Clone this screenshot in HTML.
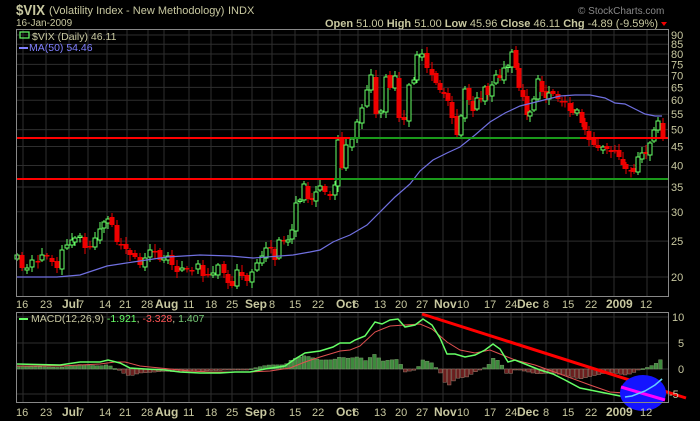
<!DOCTYPE html>
<html><head><meta charset="utf-8"><style>
body{margin:0;background:#000;width:700px;height:421px;overflow:hidden}
svg{display:block}
text{font-family:"Liberation Sans",sans-serif}
</style></head><body>
<svg id="s" width="700" height="421" xmlns="http://www.w3.org/2000/svg">
<rect width="700" height="421" fill="#000"/>
<g id="grid"></g>
<g id="mid"></g>
<text x="16" y="15" font-size="15" font-weight="bold" fill="#c8c8a0" textLength="29" lengthAdjust="spacingAndGlyphs">$VIX</text>
<text x="49" y="14" font-size="11" fill="#c8c8a0">(Volatility Index - New Methodology)</text>
<text x="228" y="14" font-size="11" fill="#c8c8a0">INDX</text>
<text x="16" y="26" font-size="10" fill="#c8c8a0">16-Jan-2009</text>
<text x="578" y="14" font-size="10" fill="#888">© StockCharts.com</text>
<text x="658" y="27" font-size="11" fill="#c8c8a0" text-anchor="end"><tspan font-weight="bold">Open</tspan> 51.00 <tspan font-weight="bold">High</tspan> 51.00 <tspan font-weight="bold">Low</tspan> 45.96 <tspan font-weight="bold">Close</tspan> 46.11 <tspan font-weight="bold">Chg</tspan> -4.89 (-9.59%)</text>
<polygon points="661,22 667,22 664,26" fill="#e00"/>
<rect x="20" y="32" width="9" height="6" fill="none" stroke="#6f6" stroke-width="1.2"/>
<text x="32" y="40" font-size="10.5" fill="#c8c8a0">$VIX (Daily) 46.11</text>
<rect x="19" y="47" width="9" height="2" fill="#8080ff"/>
<text x="29" y="51" font-size="10.5" fill="#8080ff">MA(50) 54.46</text>
<rect x="19" y="318" width="9" height="2" fill="#6f6"/>
<text x="31" y="322" font-size="10.5" fill="#c8c8a0">MACD(12,26,9) <tspan fill="#6f6">-1.921</tspan>, <tspan fill="#f55">-3.328</tspan>, <tspan fill="#7c7">1.407</tspan></text>
<g id="top"></g>
</svg>
<script>
var NS="http://www.w3.org/2000/svg";
function el(p,t,a){var e=document.createElementNS(NS,t);for(var k in a)e.setAttribute(k,a[k]);document.getElementById(p).appendChild(e);return e;}
function txt(p,x,y,s,o){var e=el(p,'text',Object.assign({x:x,y:y,'font-size':11,fill:'#c8c8a0'},o||{}));e.textContent=s;}
var vx=[23,46,69,88,107,127,148,164,189,211,232,252,272,295,318,340,358,380,400,422,443,462,490,511,522,546,568,591,614,647];
vx.forEach(function(x){el('grid','line',{x1:x,y1:30,x2:x,y2:296,stroke:'#2e2e2e'});el('grid','line',{x1:x,y1:312,x2:x,y2:403,stroke:'#2e2e2e'});});
function py(p){return 277-160.9*Math.log(p/20);}
[20,25,30,35,40,45,50,55,60,65,70,75,80,85,90].forEach(function(p){var y=py(p);el('grid','line',{x1:16,y1:y,x2:668,y2:y,stroke:'#2e2e2e'});txt('top',671,y+4,p,{'font-size':11});});
[[10,317],[5,343],[0,369],[-5,394]].forEach(function(a){el('grid','line',{x1:16,y1:a[1],x2:668,y2:a[1],stroke:'#2e2e2e'});txt('top',a[0]<0?669:(a[0]>9?672:678),a[1]+4,a[0],{'font-size':11});});
var dl=[[16,'16'],[40,'23'],[62,'Jul',1],[78,'7'],[99,'14'],[119,'21'],[141,'28'],[155,'Aug',1],[183,'11'],[205,'18'],[226,'25'],[245,'Sep',1],[269,'8'],[289,'15'],[312,'22'],[336,'Oct',1],[353,'6'],[374,'13'],[395,'20'],[416,'27'],[434,'Nov',1],[457,'10'],[484,'17'],[505,'24'],[517,'Dec',1],[543,'8'],[562,'15'],[585,'22'],[606,'2009',1],[640,'12']];
[304,412].forEach(function(r){dl.forEach(function(d){txt('top',d[0],r+4,d[1],d[2]?{'font-weight':'bold','font-size':12}:{'font-size':11});});});
var C=[[17,255],[22,268],[27,268],[32,260],[38,262],[42,255],[47,256],[52,262],[57,268],[62,250],[67,245],[72,240],[75,238],[80,236],[85,248],[90,247],[95,238],[100,229],[104,222],[108,219],[112,225],[117,242],[121,245],[126,249],[130,255],[135,257],[140,265],[145,258],[150,250],[155,252],[160,260],[164,258],[168,256],[172,265],[177,272],[182,268],[187,268],[192,270],[198,264],[203,276],[208,275],[213,273],[218,265],[224,273],[228,283],[232,286],[237,270],[242,276],[247,281],[252,272],[257,263],[262,256],[266,248],[271,248],[275,260],[279,240],[284,240],[288,240],[292,230],[296,203],[300,200],[304,184],[308,199],[312,200],[316,192],[320,186],[325,192],[330,196],[335,185],[338,140],[342,168],[346,145],[352,139],[357,122],[362,108],[367,90],[371,75],[376,114],[381,111],[386,77],[390,88],[395,76],[399,118],[404,120],[409,85],[414,80],[417,55],[422,54],[427,68],[432,75],[436,83],[440,90],[444,94],[448,101],[452,118],[457,135],[461,116],[465,89],[469,100],[473,111],[477,98],[481,99],[485,87],[488,95],[492,85],[496,75],[500,78],[504,68],[508,66],[512,52],[516,68],[519,88],[523,97],[527,115],[530,112],[534,99],[538,79],[542,92],[546,98],[549,93],[553,94],[558,99],[562,102],[565,102],[570,111],[573,113],[577,110],[582,123],[585,130],[589,140],[594,145],[598,148],[603,147],[607,149],[611,152],[615,150],[619,157],[623,165],[626,169],[631,170],[634,172],[638,157],[642,153],[646,154],[650,143],[654,130],[658,121],[663,137]];
for(var i=0;i<C.length;i++){var x=C[i][0],c=C[i][1],o=i?C[i-1][1]+((i*7)%5-2):c+4;var up=c<o;var t=Math.min(o,c),b=Math.max(o,c);if(b-t<1.5)b=t+1.5;var h=t-2-(i*13)%6,l=b+2+(i*11)%5;var col=up?'#66ff66':'#ee0000';
el('mid','line',{x1:x,y1:h,x2:x,y2:l,stroke:col,'stroke-width':1});
if(up)el('mid','rect',{x:x-2,y:t,width:4,height:b-t,fill:'#000',stroke:col,'stroke-width':1});else el('mid','rect',{x:x-2.5,y:t,width:5,height:b-t,fill:col});}
function pl(pts,col,w,g){el(g||'mid','polyline',{points:pts.map(function(p){return p.join(',')}).join(' '),fill:'none',stroke:col,'stroke-width':w});}
pl([[16,277],[57,277],[80,275],[107,266],[133,262],[167,257],[200,255],[230,256],[253,258],[293,255],[310,252],[320,250],[333,242],[340,239],[350,235],[367,225],[380,212],[395,197],[410,184],[420,171],[433,160],[447,153],[460,147],[475,135],[490,122],[505,113],[520,106],[540,101],[560,96],[575,95],[590,95],[605,98],[615,103],[625,104],[635,109],[645,114],[655,116],[662,116]],'#7070e0',1.2);
el('mid','line',{x1:16,y1:138,x2:668,y2:138,stroke:'#f00','stroke-width':2});
el('mid','line',{x1:350,y1:138,x2:580,y2:138,stroke:'#1a9a1a','stroke-width':2});
el('mid','line',{x1:16,y1:179,x2:334,y2:179,stroke:'#f00','stroke-width':2});
el('mid','line',{x1:334,y1:179,x2:668,y2:179,stroke:'#1a9a1a','stroke-width':2});
var M=[[16,364],[60,365],[80,362],[100,362],[108,360],[120,363],[130,368],[145,369],[165,370],[180,372],[200,373],[220,373],[235,372],[250,372],[265,369],[285,366],[295,359],[305,353],[320,351],[333,347],[340,343],[350,343],[355,340],[365,336],[375,322],[382,324],[390,320],[398,319],[405,327],[415,325],[423,319],[432,325],[440,338],[447,354],[455,354],[465,357],[475,355],[485,350],[493,344],[500,349],[508,362],[515,360],[525,364],[540,370],[553,374],[565,380],[580,388],[595,391],[610,394],[625,397],[632,396],[645,391],[655,385],[662,379]];
var S=[[16,366],[60,366],[100,364],[115,362],[125,362],[140,366],[160,368],[190,371],[210,372],[250,372],[270,371],[290,368],[305,362],[320,357],[340,351],[350,350],[360,346],[375,332],[390,326],[405,325],[420,324],[432,329],[447,342],[460,350],[475,353],[490,350],[500,354],[515,360],[535,365],[560,374],[590,385],[610,392],[625,393],[640,393],[662,386]];
function ip(a,x){for(var i=1;i<a.length;i++)if(a[i][0]>=x){var f=(x-a[i-1][0])/(a[i][0]-a[i-1][0]);return a[i-1][1]+f*(a[i][1]-a[i-1][1]);}return a[a.length-1][1];}
for(var x=18;x<=662;x+=4.4){var d=(ip(M,x)-ip(S,x))*1.5;var y=369+d;var pos=d<0;el('mid','rect',{x:x-1.8,y:Math.min(369,y),width:3.6,height:Math.max(1,Math.abs(d)),fill:pos?'#3c8a3c':'#6a1e1e',stroke:pos?'#7a9a6a':'#a08070','stroke-width':0.5});}
pl(S,'#e05050',1);pl(M,'#66ff66',1.5);
el('mid','line',{x1:422,y1:314,x2:686,y2:398,stroke:'#f00','stroke-width':3});
el('mid','ellipse',{cx:643,cy:393,rx:23,ry:18,fill:'#1414ff'});
el('mid','line',{x1:621,y1:387,x2:665,y2:400,stroke:'#f0f','stroke-width':3});
el('mid','polyline',{points:'625,397 632,396 645,391 655,385 662,379',fill:'none',stroke:'#66ccff','stroke-width':1.5});
el('top','rect',{x:16.5,y:29.5,width:652,height:267,fill:'none',stroke:'#888'});
el('top','rect',{x:16.5,y:312.5,width:652,height:90,fill:'none',stroke:'#888'});
</script>
</body></html>
